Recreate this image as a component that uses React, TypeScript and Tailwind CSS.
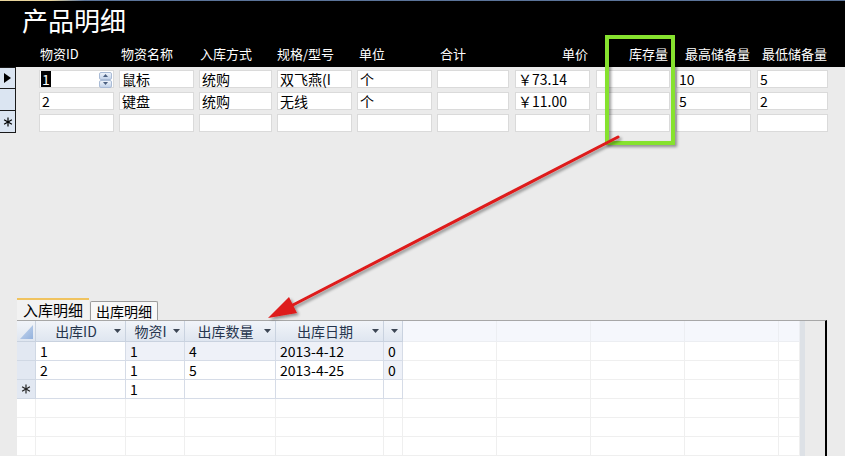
import React from 'react';

const fields = [
  { label: '物资ID', w: 'w-[75px]', ml: 'ml-[23px]', lp: 'pl-[1px]', right: false },
  { label: '物资名称', w: 'w-[75px]', ml: 'ml-[5px]', lp: 'pl-[2px]', right: false },
  { label: '入库方式', w: 'w-[73px]', ml: 'ml-[5px]', lp: 'pl-[1px]', right: false },
  { label: '规格/型号', w: 'w-[75px]', ml: 'ml-[5px]', lp: 'pl-0', right: false },
  { label: '单位', w: 'w-[75px]', ml: 'ml-[5px]', lp: 'pl-[2px]', right: false },
  { label: '合计', w: 'w-[72px]', ml: 'ml-[5px]', lp: 'pl-[3px]', right: false },
  { label: '单价', w: 'w-[75px]', ml: 'ml-[6px]', lp: 'pr-[2px]', right: true },
  { label: '库存量', w: 'w-[74px]', ml: 'ml-[6px]', lp: 'pr-[2px]', right: true },
  { label: '最高储备量', w: 'w-[75px]', ml: 'ml-[6px]', lp: 'pl-[9px]', right: false },
  { label: '最低储备量', w: 'w-[71px]', ml: 'ml-[6px]', lp: 'pl-[5px]', right: false },
];

const records = [
  ['1', '鼠标', '统购', '双飞燕(I', '个', '', '￥73.14', '', '10', '5'],
  ['2', '键盘', '统购', '无线', '个', '', '￥11.00', '', '5', '2'],
  ['', '', '', '', '', '', '', '', '', ''],
];

const subRows = [
  ['1', '1', '4', '2013-4-12', '0'],
  ['2', '1', '5', '2013-4-25', '0'],
  ['', '1', '', '', ''],
];

const Arrow = () => (
  <svg width="7" height="4" viewBox="0 0 7 4" className="shrink-0">
    <polygon points="0,0 7,0 3.5,4" fill="#3c4654" />
  </svg>
);

const Star = ({ color = '#000' }: { color?: string }) => (
  <svg width="10" height="10" viewBox="0 0 10 10">
    <g stroke={color} strokeWidth="1.2">
      <line x1="5" y1="0.5" x2="5" y2="9.5" />
      <line x1="1.1" y1="2.7" x2="8.9" y2="7.3" />
      <line x1="1.1" y1="7.3" x2="8.9" y2="2.7" />
    </g>
  </svg>
);

const Spinner = () => (
  <div className="flex flex-col mr-[2px] mt-[1px] gap-0">
    <div className="w-[13px] h-[8px] rounded-[2px] border border-[#a9bbd6] bg-linear-to-b from-[#eef3fa] to-[#c3d3ea] flex items-center justify-center">
      <svg width="5" height="3" viewBox="0 0 5 3"><polygon points="0,3 5,3 2.5,0" fill="#4a5f80" /></svg>
    </div>
    <div className="w-[13px] h-[8px] rounded-[2px] border border-[#a9bbd6] bg-linear-to-b from-[#eef3fa] to-[#c3d3ea] flex items-center justify-center">
      <svg width="5" height="3" viewBox="0 0 5 3"><polygon points="0,0 5,0 2.5,3" fill="#4a5f80" /></svg>
    </div>
  </div>
);

const hdrCell = 'h-[21px] flex items-center border-r border-b border-[#c9d2df] bg-linear-to-b from-[#f1f4f9] to-[#dfe6f0] text-[#26354d]';
const offHdr = 'h-[21px] border-r border-b border-[#eceef2] bg-[#f5f7fc]';
const onCell = 'h-[19px] border-r border-b border-[#d6dce7] pl-[4px] leading-[18px] whitespace-nowrap';
const offCell = 'h-[19px] border-r border-b border-[#efefef]';

const App: React.FC = () => {
  return (
    <div className="relative w-[845px] h-[456px] overflow-hidden bg-[#ebebeb] flex flex-col font-['Noto_Sans_CJK_SC',sans-serif] text-black">
      {/* window edge */}
      <div className="h-px shrink-0 bg-linear-to-r from-[#e9d59c] from-[6%] to-[#5a7399] to-[10%]" />

      {/* form header */}
      <div className="h-[66px] shrink-0 bg-black text-white">
        <div className="pl-[22px] pt-[2px] text-[26px] leading-[34px]">产品明细</div>
        <div className="flex mt-[8px] pl-[16px] text-[13px] leading-[17px]">
          {fields.map((f) => (
            <div key={f.label} className={`${f.w} ${f.ml} ${f.lp} whitespace-nowrap ${f.right ? 'text-right' : ''}`}>
              {f.label}
            </div>
          ))}
        </div>
      </div>

      {/* continuous form records */}
      <div className="flex flex-col shrink-0">
        {records.map((rec, ri) => (
          <div key={ri} className="flex h-[22px]">
            <div className={`w-[16px] h-[22px] shrink-0 bg-[#dbe5f2] border-r border-b border-[#1a1a1a] flex items-center justify-center ${ri === 0 ? 'border-t' : ''}`}>
              {ri === 0 && (
                <svg width="7" height="10" viewBox="0 0 7 10"><polygon points="0,0 7,5 0,10" fill="#000" /></svg>
              )}
              {ri === 2 && <Star />}
            </div>
            {fields.map((f, ci) => (
              <div
                key={ci}
                className={`${f.w} ${f.ml} mt-[3px] h-[18px] shrink-0 bg-white shadow-[inset_0_0_0_1px_#dadada] flex items-center text-[14px] leading-[18px] whitespace-nowrap`}
              >
                {ri === 0 && ci === 0 ? (
                  <>
                    <div className="flex-1 pl-[2px] flex items-center">
                      <span className="inline-block bg-black text-white px-px leading-[16px]">1</span>
                    </div>
                    <Spinner />
                  </>
                ) : (
                  <div className="flex-1 pl-[3px]">{rec[ci]}</div>
                )}
              </div>
            ))}
          </div>
        ))}
      </div>

      <div className="flex-1" />

      {/* tabs */}
      <div className="h-[22px] shrink-0 flex items-end pl-[17px]">
        <div className="w-[72px] h-[22px] border-t-2 border-[#f0c35f] bg-[#f2f2f2] text-[15px] leading-[19px] text-center">入库明细</div>
        <div className="ml-px w-[68px] h-[19px] border border-b-0 border-[#9c9c9c] rounded-t-[2px] bg-[#f8f8f8] text-[14px] leading-[18px] text-center">出库明细</div>
      </div>

      {/* subform */}
      <div className="ml-[17px] w-[810px] h-[136px] shrink-0 border-t border-[#a7a7a7] border-r-2 border-r-black flex">
        <div className="w-[783px] bg-white grid grid-cols-[19px_90px_59px_91px_108px_19px_94px_94px_94px_94px_21px] grid-rows-[21px_repeat(6,19px)] text-[14px] content-start">
          {/* header */}
          <div className={`${hdrCell} justify-end items-end`}>
            <svg width="17" height="19" viewBox="0 0 17 19">
              <defs>
                <linearGradient id="tri" x1="0" y1="0" x2="1" y2="1">
                  <stop offset="0" stopColor="#c9d9ef" />
                  <stop offset="1" stopColor="#94b2dd" />
                </linearGradient>
              </defs>
              <polygon points="15,3 15,17 2,17" fill="url(#tri)" />
            </svg>
          </div>
          {['出库ID', '物资I', '出库数量', '出库日期', ''].map((h, i) => (
            <div key={i} className={`${hdrCell} pr-[4px] pl-[2px]`}>
              <span className="flex-1 text-center leading-[19px] whitespace-nowrap">{h}</span>
              <Arrow />
            </div>
          ))}
          {[0, 1, 2, 3, 4].map((i) => (
            <div key={`oh${i}`} className={offHdr} />
          ))}

          {/* records */}
          {subRows.map((r, ri) => (
            <React.Fragment key={ri}>
              <div className="h-[19px] border-r border-b border-[#d0d8e4] bg-[#e2e8f2] flex items-center justify-center">
                {ri === 2 && <Star color="#222" />}
              </div>
              {r.map((v, ci) => {
                const tint = (ri === 0 && ci > 0) || (ri === 1 && ci === 4);
                return (
                  <div key={ci} className={`${onCell} ${tint ? 'bg-[#eef1f8]' : 'bg-white'}`}>
                    {v}
                  </div>
                );
              })}
              {[0, 1, 2, 3, 4].map((i) => (
                <div key={`o${i}`} className={offCell} />
              ))}
            </React.Fragment>
          ))}

          {/* empty grid */}
          {[0, 1, 2].map((ri) => (
            <React.Fragment key={`e${ri}`}>
              {Array.from({ length: 11 }).map((_, ci) => (
                <div key={ci} className={offCell} />
              ))}
            </React.Fragment>
          ))}
        </div>
        <div className="w-[5px] bg-[#dde1e6]" />
        <div className="flex-1 bg-[#ebebeb]" />
      </div>

      {/* annotation overlay */}
      <svg className="absolute inset-0 pointer-events-none" width={845} height={456}>
        <defs>
          <filter id="sh" x="-20%" y="-20%" width="140%" height="140%">
            <feGaussianBlur in="SourceAlpha" stdDeviation="1.5" />
            <feOffset dx="2" dy="2" />
            <feComponentTransfer>
              <feFuncA type="linear" slope="0.4" />
            </feComponentTransfer>
            <feMerge>
              <feMergeNode />
              <feMergeNode in="SourceGraphic" />
            </feMerge>
          </filter>
        </defs>
        <rect x={607} y={37} width={66} height={106} fill="none" stroke="#86e22f" strokeWidth={4} filter="url(#sh)" />
        <g filter="url(#sh)">
          <line x1={618} y1={137} x2={291} y2={306} stroke="#de1a1a" strokeWidth={3} strokeLinecap="round" />
          <polygon points="268,318 297,313 289,297" fill="#de1a1a" />
        </g>
      </svg>
    </div>
  );
};

export default App;
